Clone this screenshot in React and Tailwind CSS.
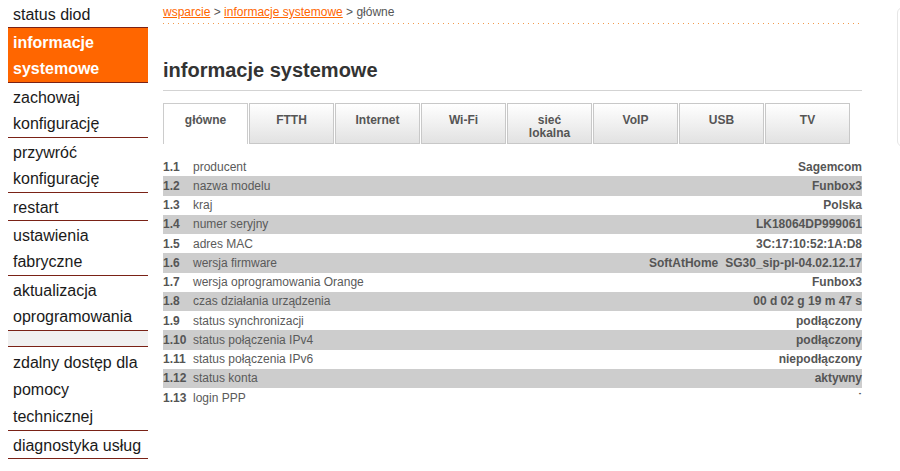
const menu = [
  { lines: ['status diod'] },
  { lines: ['informacje', 'systemowe'], active: true },
  { lines: ['zachowaj', 'konfigurację'] },
  { lines: ['przywróć', 'konfigurację'] },
  { lines: ['restart'] },
  { lines: ['ustawienia', 'fabryczne'] },
  { lines: ['aktualizacja', 'oprogramowania'] },
  { spacer: true },
  { lines: ['zdalny dostęp dla', 'pomocy', 'technicznej'] },
  { lines: ['diagnostyka usług'] },
];

// wysokość linii zależna od liczby wierszy w pozycji menu
const leading = { 1: 'leading-[25px]', 2: 'leading-[26px]', 3: 'leading-[27px]' };

const tabs = [['główne'], ['FTTH'], ['Internet'], ['Wi-Fi'], ['sieć', 'lokalna'], ['VoIP'], ['USB'], ['TV']];

const rows = [
  ['1.1', 'producent', 'Sagemcom'],
  ['1.2', 'nazwa modelu', 'Funbox3'],
  ['1.3', 'kraj', 'Polska'],
  ['1.4', 'numer seryjny', 'LK18064DP999061'],
  ['1.5', 'adres MAC', '3C:17:10:52:1A:D8'],
  ['1.6', 'wersja firmware', 'SG30_sip-pl-04.02.12.17', 'SoftAtHome'],
  ['1.7', 'wersja oprogramowania Orange', 'Funbox3'],
  ['1.8', 'czas działania urządzenia', '00 d 02 g 19 m 47 s'],
  ['1.9', 'status synchronizacji', 'podłączony'],
  ['1.10', 'status połączenia IPv4', 'podłączony'],
  ['1.11', 'status połączenia IPv6', 'niepodłączony'],
  ['1.12', 'status konta', 'aktywny'],
  ['1.13', 'login PPP', '˙'],
];

const App = () => {
  return (
    <div className="flex min-h-[471px] w-full overflow-hidden bg-white pl-2 font-['Liberation_Sans',Arial,sans-serif]">
      {/* menu boczne */}
      <nav className="w-[140px] shrink-0">
        {menu.map((item, i) =>
          item.spacer ? (
            <div key={i} className="h-[16px] border-b border-[#7a2216] bg-[#f0f0f0]" />
          ) : (
            <div
              key={i}
              className={`border-b border-[#7a2216] pl-[5px] pt-[2px] text-[16px] ${leading[item.lines.length]} ${
                item.active ? 'bg-[#ff6600] font-bold text-white' : 'text-[#1a1a1a]'
              }`}
            >
              {item.lines.map((l) => (
                <div key={l}>{l}</div>
              ))}
            </div>
          )
        )}
      </nav>

      <main className="ml-[15px] w-[699px] shrink-0">
        <div className="pt-[4px] text-[12px] leading-[16px] text-[#555]">
          <a className="text-[#ff6600] underline">wsparcie</a> &gt;{' '}
          <a className="text-[#ff6600] underline">informacje systemowe</a> &gt; główne
        </div>
        <div className="mt-[3px] h-px bg-[repeating-linear-gradient(to_right,#f39a4a_0px,#f39a4a_1px,transparent_1px,transparent_5px)]" />

        <h1 className="mt-[34px] text-[20px] font-bold leading-[24px] text-[#333]">informacje systemowe</h1>
        <div className="mt-[8px] border-b border-[#d3d3d3]" />

        <div className="mt-[12px] flex gap-px">
          {tabs.map((t, i) => (
            <div
              key={i}
              className={`h-[41px] w-[85px] pt-[10px] text-center text-[12px] font-bold leading-[13px] text-[#555] ${
                i === 0
                  ? 'border-x border-t border-[#cccccc] bg-white'
                  : 'border border-[#c8c8c8] bg-gradient-to-b from-white to-[#e2e2e2]'
              }`}
            >
              {t.map((l) => (
                <div key={l}>{l}</div>
              ))}
            </div>
          ))}
        </div>

        <div className="mt-[13px]">
          {rows.map(([num, label, value, extra], i) => (
            <div
              key={num}
              className={`flex h-[19.25px] items-center text-[12px] text-[#555] ${i % 2 === 1 ? 'bg-[#cdcdcd]' : ''}`}
            >
              <span className="w-[30px] shrink-0 font-bold">{num}</span>
              <span className="flex-1 text-[#5a5a5a]">{label}</span>
              {extra && <span className="mr-[7px] font-bold">{extra}</span>}
              <span className="font-bold">{value}</span>
            </div>
          ))}
        </div>
      </main>

      <div className="ml-[35px] mt-[7px] h-[140px] w-[40px] shrink-0 rounded-md border border-[#e6e6e6]" />
    </div>
  );
};

export default App;
